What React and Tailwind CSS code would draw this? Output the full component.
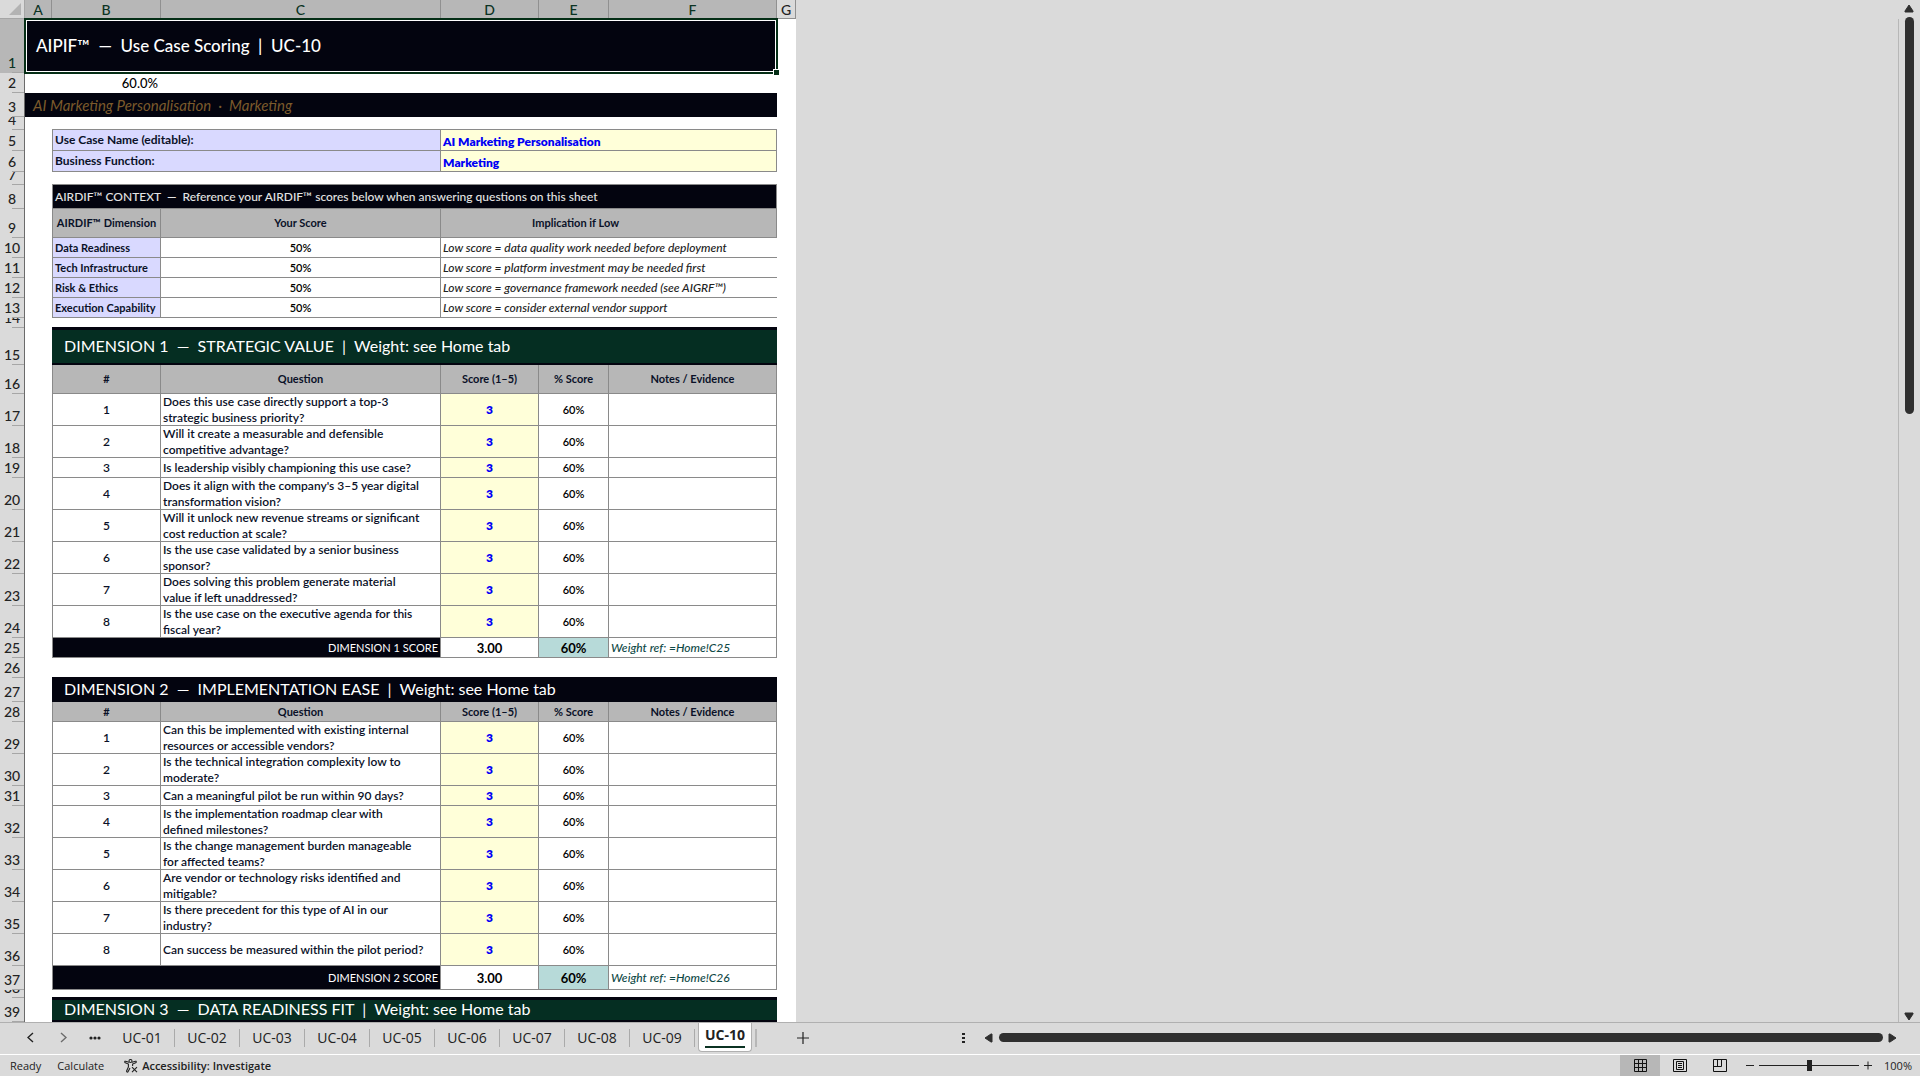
import { useState } from "react";
import clsx from "clsx";

const columns = [
  { id: "A", width: "w-[27px]" },
  { id: "B", width: "w-[109px]" },
  { id: "C", width: "w-[280px]" },
  { id: "D", width: "w-[98px]" },
  { id: "E", width: "w-[70px]" },
  { id: "F", width: "w-[168px]" },
  { id: "G", width: "w-[19px]" },
];

// row heights used on the sheet
const heights = {
  8: "h-[8px]",
  10: "h-[10px]",
  13: "h-[13px]",
  20: "h-[20px]",
  21: "h-[21px]",
  24: "h-[24px]",
  29: "h-[29px]",
  32: "h-[32px]",
  37: "h-[37px]",
  54: "h-[54px]",
};

const context = [
  ["Data Readiness", "Low score = data quality work needed before deployment"],
  ["Tech Infrastructure", "Low score = platform investment may be needed first"],
  ["Risk & Ethics", "Low score = governance framework needed (see AIGRF™)"],
  ["Execution Capability", "Low score = consider external vendor support"],
];

const strategic = [
  ["Does this use case directly support a top-3", "strategic business priority?"],
  ["Will it create a measurable and defensible", "competitive advantage?"],
  ["Is leadership visibly championing this use case?"],
  ["Does it align with the company's 3–5 year digital", "transformation vision?"],
  ["Will it unlock new revenue streams or significant", "cost reduction at scale?"],
  ["Is the use case validated by a senior business", "sponsor?"],
  ["Does solving this problem generate material", "value if left unaddressed?"],
  ["Is the use case on the executive agenda for this", "fiscal year?"],
];

const implementation = [
  ["Can this be implemented with existing internal", "resources or accessible vendors?"],
  ["Is the technical integration complexity low to", "moderate?"],
  ["Can a meaningful pilot be run within 90 days?"],
  ["Is the implementation roadmap clear with", "defined milestones?"],
  ["Is the change management burden manageable", "for affected teams?"],
  ["Are vendor or technology risks identified and", "mitigable?"],
  ["Is there precedent for this type of AI in our", "industry?"],
  ["Can success be measured within the pilot period?"],
];

const tabs = ["UC-01", "UC-02", "UC-03", "UC-04", "UC-05", "UC-06", "UC-07", "UC-08", "UC-09", "UC-10"];

const Row = ({ n, h, selected, children }) => (
  <tr className={heights[h]}>
    <th
      scope="row"
      className={clsx(
        "border-r border-[#6b6b6b] p-0 font-normal",
        selected ? "bg-[#b7b7b7] text-[#0b3323]" : "bg-[#dadada] text-[#222]"
      )}
    >
      <div className={clsx("flex flex-col justify-end overflow-hidden", heights[h])}>
        <span className="shrink-0 text-center text-sm leading-[18px] font-medium">{n}</span>
        <span className="ml-3 h-px shrink-0 bg-[#a6a6a6]" />
      </div>
    </th>
    {children}
    <td className="bg-white p-0" />
  </tr>
);

const Gap = ({ span = 1 }) => <td colSpan={span} className="bg-white p-0" />;

const Cell = ({ as: Tag = "td", span = 1, className, children }) => (
  <Tag
    colSpan={span}
    className={clsx(
      "border-r border-b border-[#8a8a8a] px-[2px] py-0 align-middle whitespace-pre",
      className
    )}
  >
    {children}
  </Tag>
);

const head = "bg-[#b7b7b7] text-center text-[11px] leading-4 font-bold text-[#0a1128]";
const edge = "border-l";

const Banner = ({ n, h, green, title }) => (
  <Row n={n} h={h}>
    <Gap />
    <td
      colSpan={5}
      className={clsx(
        "border-y-2 border-[#03040f] pt-0 pb-[2px] pl-3 align-middle text-base leading-4 whitespace-pre text-white shadow-[0_-1px_0_#03040f]",
        green ? "bg-[#052e22]" : "bg-[#03040f]"
      )}
    >
      {title}
    </td>
  </Row>
);

const TableHead = ({ n, h }) => (
  <Row n={n} h={h}>
    <Gap />
    <Cell as="th" className={clsx(head, edge)}>#</Cell>
    <Cell as="th" className={head}>Question</Cell>
    <Cell as="th" className={head}>Score (1–5)</Cell>
    <Cell as="th" className={head}>% Score</Cell>
    <Cell as="th" className={head}>Notes / Evidence</Cell>
  </Row>
);

const Question = ({ n, h, index, lines }) => (
  <Row n={n} h={h}>
    <Gap />
    <Cell className={clsx(edge, "bg-white text-center text-xs leading-4 font-semibold text-[#0a1128]")}>{index}</Cell>
    <Cell className="bg-white text-xs font-semibold text-[#0a1128]">
      <div className={clsx("flex flex-col justify-center leading-4", h === 32 ? "h-[30px]" : "h-4")}>
        {lines.map((line) => (
          <span key={line}>{line}</span>
        ))}
      </div>
    </Cell>
    <Cell className="bg-[#ffffd9] text-center text-xs leading-4 font-extrabold text-[#0000f5]">3</Cell>
    <Cell className="bg-white text-center text-[11px] leading-4 font-semibold text-black">60%</Cell>
    <Cell className="bg-white" />
  </Row>
);

const ScoreRow = ({ n, h, label, weight }) => (
  <Row n={n} h={h}>
    <Gap />
    <Cell span={2} className={clsx(edge, "bg-[#03040f] text-right text-[11px] leading-4 text-white")}>{label}</Cell>
    <Cell className="bg-white text-center text-[13px] leading-4 font-bold text-black">3.00</Cell>
    <Cell className="bg-[#b7dad9] text-center text-[13px] leading-4 font-bold text-black">60%</Cell>
    <Cell className="bg-white text-xs leading-4 font-medium text-[#0f4a47] italic">{weight}</Cell>
  </Row>
);

const Sheet = () => (
  <table className="w-[796px] shrink-0 table-fixed border-separate border-spacing-0 self-start font-['Lato',sans-serif]">
    <thead>
      <tr className="h-[19px] text-sm leading-4 text-[#0b3323]">
        <th className="w-[25px] border-r border-b border-[#a6a6a6] bg-[#dadada] p-0">
          <svg className="ml-[9px] block" width="12" height="12" viewBox="0 0 12 12">
            <path d="M12 0V12H0Z" fill="#b3b3b3" />
          </svg>
        </th>
        {columns.map((col) => (
          <th
            key={col.id}
            scope="col"
            className={clsx(
              "border-r border-b border-[#909090] px-0 pt-[2px] pb-0 font-medium",
              col.width,
              col.id === "G" ? "bg-[#dadada] text-[#222]" : "bg-[#b7b7b7]"
            )}
          >
            {col.id}
          </th>
        ))}
      </tr>
    </thead>
    <tbody>
      <Row n={1} h={54} selected>
        <td colSpan={6} className="relative bg-[#03040f] py-0 pl-[11px] text-[17px] leading-6 font-medium whitespace-pre text-white">
          {"AIPIF™  —  Use Case Scoring  |  UC-10"}
          <div className="pointer-events-none absolute -inset-px border-2 border-[#052e16]">
            <div className="h-full border border-white" />
            <div className="absolute -right-[3px] -bottom-[3px] size-[6px] border-t border-l border-white bg-[#052e16]" />
          </div>
        </td>
      </Row>
      <Row n={2} h={20}>
        <Gap />
        <td className="bg-white py-0 pr-[3px] text-right text-[13px] leading-4 font-medium text-black">60.0%</td>
        <Gap span={4} />
      </Row>
      <Row n={3} h={24}>
        <td colSpan={6} className="bg-[#03040f] py-0 pl-2 text-[15px] leading-4 whitespace-pre text-[#7b5a2b] italic">
          {"AI Marketing Personalisation  ·  Marketing"}
        </td>
      </Row>
      <Row n={4} h={13}>
        <Gap />
        <td colSpan={5} className="border-b border-[#8a8a8a] bg-white p-0" />
      </Row>
      <Row n={5} h={21}>
        <Gap />
        <Cell span={2} className={clsx(edge, "bg-[#d9d9ff] text-xs leading-4 font-bold text-[#0a1128]")}>
          Use Case Name (editable):
        </Cell>
        <Cell span={3} className="bg-[#ffffd9] pt-1 text-xs leading-4 font-extrabold text-[#0000f5]">
          AI Marketing Personalisation
        </Cell>
      </Row>
      <Row n={6} h={21}>
        <Gap />
        <Cell span={2} className={clsx(edge, "bg-[#d9d9ff] text-xs leading-4 font-bold text-[#0a1128]")}>
          Business Function:
        </Cell>
        <Cell span={3} className="bg-[#ffffd9] pt-1 text-xs leading-4 font-extrabold text-[#0000f5]">
          Marketing
        </Cell>
      </Row>
      <Row n={7} h={13}>
        <Gap />
        <td colSpan={5} className="border-b border-[#8a8a8a] bg-white p-0" />
      </Row>
      <Row n={8} h={24}>
        <Gap />
        <Cell span={5} className={clsx(edge, "bg-[#03040f] text-xs leading-4 font-medium text-[#e4e4e4]")}>
          {"AIRDIF™ CONTEXT  —  Reference your AIRDIF™ scores below when answering questions on this sheet"}
        </Cell>
      </Row>
      <Row n={9} h={29}>
        <Gap />
        <Cell as="th" className={clsx(head, edge)}>AIRDIF™ Dimension</Cell>
        <Cell as="th" className={head}>Your Score</Cell>
        <Cell as="th" span={3} className={clsx(head, "pr-[68px]")}>Implication if Low</Cell>
      </Row>
      {context.map(([name, note], i) => (
        <Row key={name} n={10 + i} h={20}>
          <Gap />
          <Cell className={clsx(edge, "bg-[#d9d9ff] text-[11px] leading-4 font-bold text-[#0a1128]")}>{name}</Cell>
          <Cell className="bg-white text-center text-[11px] leading-4 font-semibold text-black">50%</Cell>
          <td colSpan={3} className="border-b border-[#8a8a8a] bg-white px-[2px] py-0 text-xs leading-4 font-medium whitespace-pre text-[#222] italic">
            {note}
          </td>
        </Row>
      ))}
      <Row n={14} h={10}><Gap span={6} /></Row>
      <Banner n={15} h={37} green title="DIMENSION 1  —  STRATEGIC VALUE  |  Weight: see Home tab" />
      <TableHead n={16} h={29} />
      {strategic.map((lines, i) => (
        <Question key={i} n={17 + i} h={lines.length > 1 ? 32 : 20} index={i + 1} lines={lines} />
      ))}
      <ScoreRow n={25} h={20} label="DIMENSION 1 SCORE" weight="Weight ref: =Home!C25" />
      <Row n={26} h={20}><Gap span={6} /></Row>
      <Banner n={27} h={24} title="DIMENSION 2  —  IMPLEMENTATION EASE  |  Weight: see Home tab" />
      <TableHead n={28} h={20} />
      {implementation.map((lines, i) => (
        <Question key={i} n={29 + i} h={i === 2 ? 20 : 32} index={i + 1} lines={lines} />
      ))}
      <ScoreRow n={37} h={24} label="DIMENSION 2 SCORE" weight="Weight ref: =Home!C26" />
      <Row n={38} h={8}><Gap span={6} /></Row>
      <Banner n={39} h={24} green title="DIMENSION 3  —  DATA READINESS FIT  |  Weight: see Home tab" />
    </tbody>
  </table>
);

const arrows = {
  up: "M5 1L9 7V8H1V7Z",
  down: "M5 8L9 2V1H1V2Z",
  left: "M1 5L7 1H8V9H7Z",
  right: "M8 5L2 1H1V9H2Z",
};

const ScrollArrow = ({ dir, label }) => (
  <button type="button" aria-label={label} className="flex size-[10px] shrink-0 items-center justify-center">
    <svg width="10" height="10" viewBox="0 0 10 10">
      <path d={arrows[dir]} fill="#2f2f2f" stroke="#2f2f2f" strokeLinejoin="round" />
    </svg>
  </button>
);

const SheetTabs = ({ active, onSelect }) => (
  <div className="flex h-[31px] shrink-0 items-center pb-[2px] font-['Open_Sans',sans-serif] text-sm text-[#222]">
    <nav className="flex h-full items-center">
      <button type="button" aria-label="Previous sheet" className="flex w-[34px] justify-end">
        <svg width="7" height="11" viewBox="0 0 7 11" fill="none" stroke="#222" strokeWidth="1.4">
          <path d="M6 1L1 5.5L6 10" />
        </svg>
      </button>
      <button type="button" aria-label="Next sheet" className="flex w-[33px] justify-end">
        <svg width="7" height="11" viewBox="0 0 7 11" fill="none" stroke="#6b6b6b" strokeWidth="1.4">
          <path d="M1 1L6 5.5L1 10" />
        </svg>
      </button>
      <button type="button" aria-label="More sheets" className="flex w-[43px] justify-center pl-3">
        <svg width="12" height="4" viewBox="0 0 12 4" fill="#222">
          <circle cx="2" cy="2" r="1.6" />
          <circle cx="6" cy="2" r="1.6" />
          <circle cx="10" cy="2" r="1.6" />
        </svg>
      </button>
      {tabs.map((tab) =>
        tab === active ? (
          <button
            key={tab}
            type="button"
            aria-current="page"
            className="mx-[3px] flex w-[54px] justify-center self-start rounded-b-[4px] border border-t-0 border-[#b0b0b0] bg-white pt-px pb-[3px] font-bold"
          >
            <span className="border-b-2 border-[#0b3323] leading-[22px]">{tab}</span>
          </button>
        ) : (
          <button
            key={tab}
            type="button"
            onClick={() => onSelect(tab)}
            className="h-[18px] w-[65px] border-r border-[#aaa] leading-[18px]"
          >
            {tab}
          </button>
        )
      )}
      <span className="h-[18px] w-[2px] bg-[#b7b7b7]" />
      <button type="button" aria-label="New sheet" className="ml-10">
        <svg width="12" height="12" viewBox="0 0 12 12" stroke="#222" strokeWidth="1.2">
          <path d="M6 0V12M0 6H12" />
        </svg>
      </button>
    </nav>
    <div className="ml-auto flex w-[57%] max-w-[958px] items-center">
      <svg className="shrink-0" width="4" height="12" viewBox="0 0 4 12" fill="#222">
        <path d="M0 1h3v2H0zM0 5h3v2H0zM0 9h3v2H0z" />
      </svg>
      <div className="ml-[18px] flex flex-1 items-center gap-1 pr-[22px]">
        <ScrollArrow dir="left" label="Scroll left" />
        <div className="mx-px h-[9px] flex-1 rounded-full bg-[#2f2f2f]" />
        <ScrollArrow dir="right" label="Scroll right" />
      </div>
    </div>
  </div>
);

const StatusBar = ({ zoom, setZoom }) => (
  <footer className="flex h-[21px] shrink-0 items-center font-['Open_Sans',sans-serif] text-[11px] leading-4 text-[#222]">
    <span className="ml-[10px]">Ready</span>
    <span className="ml-4">Calculate</span>
    <button type="button" className="ml-5 flex items-center gap-1 font-semibold">
      <svg width="14" height="14" viewBox="0 0 14 14" fill="none" stroke="#222" strokeWidth="1.1">
        <circle cx="6.5" cy="2" r="1.5" />
        <path d="M5 3.2L1.6 2.2C.6 2 .4 3.3 1.3 3.7L4.4 5V8L2.6 12C2.4 13.2 3.6 13.5 4 12.7L6 9M8 3.2L11.4 2.2C12.4 2 12.6 3.3 11.7 3.7L8.6 5V7" />
        <path d="M8 8.2L13 13.2M13 8.2L8 13.2" />
      </svg>
      Accessibility: Investigate
    </button>
    <div className="ml-auto flex h-full items-center pr-2">
      <button type="button" aria-label="Normal view" className="flex h-full w-10 items-center justify-center bg-[#b7b7b7]">
        <svg width="13" height="13" viewBox="0 0 13 13" fill="none" stroke="#111">
          <path d="M.5 .5H12.5V12.5H.5ZM.5 4.5H12.5M.5 8.5H12.5M4.5 .5V12.5M8.5 .5V12.5" />
        </svg>
      </button>
      <button type="button" aria-label="Page layout" className="flex h-full w-10 items-center justify-center">
        <svg width="14" height="13" viewBox="0 0 14 13" fill="none" stroke="#111">
          <path d="M.5 .5H13.5V12.5H.5ZM3.5 2.5H10.5V10.5H3.5ZM5 4.5H9M5 6.5H9M5 8.5H9" />
        </svg>
      </button>
      <button type="button" aria-label="Page break preview" className="flex h-full w-10 items-center justify-center">
        <svg width="14" height="13" viewBox="0 0 14 13" fill="none" stroke="#111">
          <path d="M.5 .5H13.5V12.5H.5ZM.5 7.5H8.5V.5M4.5 .5V7.5" />
        </svg>
      </button>
      <button type="button" aria-label="Zoom out" className="ml-[6px]" onClick={() => setZoom(zoom - 10)}>
        <svg width="8" height="9" viewBox="0 0 8 9" stroke="#222">
          <path d="M0 4.5H8" />
        </svg>
      </button>
      <input
        type="range"
        aria-label="Zoom"
        min="0"
        max="200"
        value={zoom}
        onChange={(e) => setZoom(Number(e.target.value))}
        className="mx-[5px] h-3 w-[100px] appearance-none bg-[linear-gradient(#222,#222)] bg-[length:100%_1px] bg-center bg-no-repeat [&::-webkit-slider-thumb]:h-[11px] [&::-webkit-slider-thumb]:w-[5px] [&::-webkit-slider-thumb]:appearance-none [&::-webkit-slider-thumb]:bg-[#222]"
      />
      <button type="button" aria-label="Zoom in" onClick={() => setZoom(zoom + 10)}>
        <svg width="8" height="9" viewBox="0 0 8 9" stroke="#222">
          <path d="M0 4.5H8M4 .5V8.5" />
        </svg>
      </button>
      <span className="w-10 text-right">{zoom}%</span>
    </div>
  </footer>
);

export default function App() {
  const [active, setActive] = useState("UC-10");
  const [zoom, setZoom] = useState(100);

  return (
    <div className="flex h-screen flex-col overflow-hidden bg-[#dadada]">
      <main className="flex min-h-0 flex-1 overflow-hidden">
        <div className="flex min-w-0 flex-1 overflow-hidden">
          <Sheet />
          <div className="mt-[19px] flex-1 border-r border-[#b7b7b7]" />
        </div>
        <div className="flex w-[21px] flex-col items-center pt-1 pr-px">
          <ScrollArrow dir="up" label="Scroll up" />
          <div className="mt-[3px] h-[39%] w-[9px] rounded-full bg-[#2f2f2f]" />
          <div className="flex-1" />
          <ScrollArrow dir="down" label="Scroll down" />
        </div>
      </main>
      <div className="h-px shrink-0 bg-[#b0b0b0]" />
      <SheetTabs active={active} onSelect={setActive} />
      <div className="h-px shrink-0 bg-white" />
      <StatusBar zoom={zoom} setZoom={setZoom} />
    </div>
  );
}
